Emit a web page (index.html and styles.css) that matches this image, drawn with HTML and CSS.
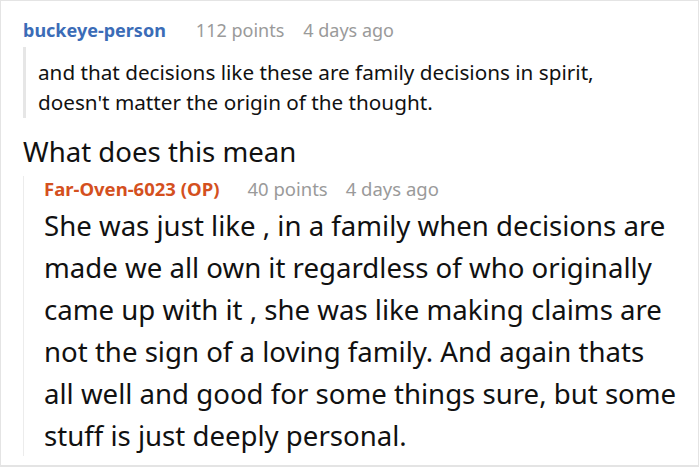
FILE: index.html
```html
<!DOCTYPE html>
<html>
<head>
  <meta charset="UTF-8">
  <title>Comments</title>
  <link rel="stylesheet" href="styles.css">
</head>
<body>
  <div class="frame">
    <div class="comment">
      <div class="meta">
        <span class="author">buckeye-person</span>
        <span class="info">112 points</span>
        <span class="info">4 days ago</span>
      </div>
      <blockquote class="quote">
        and that decisions like these are family decisions in spirit,<br>
        doesn't matter the origin of the thought.
      </blockquote>
    </div>

    <p class="question">What does this mean</p>

    <div class="reply">
      <div class="meta small">
        <span class="author op">Far-Oven-6023 (OP)</span>
        <span class="info">40 points</span>
        <span class="info">4 days ago</span>
      </div>
      <p class="reply-text">
        She was just like , in a family when decisions are<br>
        made we all own it regardless of who originally<br>
        came up with it , she was like making claims are<br>
        not the sign of a loving family. And again thats<br>
        all well and good for some things sure, but some<br>
        stuff is just deeply personal.
      </p>
    </div>
  </div>
</body>
</html>
```

FILE: styles.css
```css
body {
  margin: 0;
  font-family: "Noto Sans", "Open Sans", sans-serif;
  background: #fff;
}

.frame {
  width: 699px;
  height: 467px;
  box-sizing: border-box;
  border: 1px solid #e4e4e4;
  border-bottom-width: 2px;
  padding: 16px 0 0 22px;
  overflow: hidden;
}

.meta {
  display: flex;
  font-size: 18px;
  line-height: 26px;
}

.author {
  font-weight: bold;
  color: #3b6cb7;
  margin-right: 30px;
}

.author.op {
  color: #d4501e;
}

.info {
  color: #9a9a9a;
  margin-right: 19px;
}

.quote {
  margin: 4px 0 0 0;
  padding: 10px 0 1px 12px;
  border-left: 3px solid #e6e6e6;
  font-size: 20.7px;
  line-height: 30px;
  color: #111;
}

.question {
  margin: 17px 0 0 0;
  font-size: 27.6px;
  line-height: 32px;
  color: #111;
}

.reply {
  margin-top: 9px;
  border-left: 1px solid #ececec;
  padding-left: 20px;
}

.meta.small {
  font-size: 18.5px;
}

.meta.small .author {
  margin-right: 28px;
}

.meta.small .info {
  margin-right: 18px;
}

.reply-text {
  margin: 2px 0 0 0;
  font-size: 27.6px;
  line-height: 42px;
  color: #111;
  white-space: nowrap;
}
```
